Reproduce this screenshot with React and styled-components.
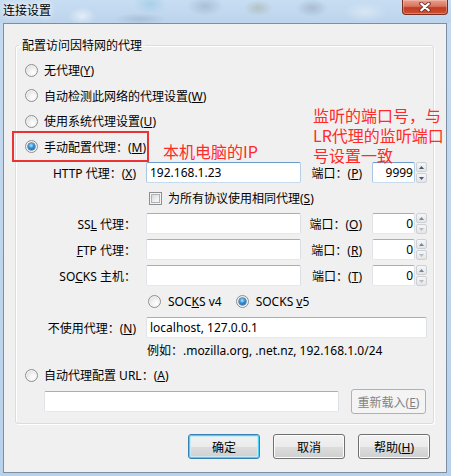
import React from 'react';
import styled, { createGlobalStyle, css } from 'styled-components';

const GlobalStyle = createGlobalStyle`
    * { box-sizing: border-box; }
    html, body { margin: 0; padding: 0; }
    body {
        background: #bfd6ee;
        font-family: "Noto Sans", "Noto Sans CJK SC", sans-serif;
        font-size: 12px;
        color: #000;
    }
    u { text-decoration: underline; text-underline-offset: 1px; }
`;

const CloseIcon = () => (
    <svg width="12" height="10" viewBox="0 0 12 10">
        <path d="M2.2 1.6 L9.8 8.4 M9.8 1.6 L2.2 8.4" stroke="#6b2a1e" strokeWidth="3.8" strokeLinecap="round" />
        <path d="M2.2 1.6 L9.8 8.4 M9.8 1.6 L2.2 8.4" stroke="#fff" strokeWidth="2.1" strokeLinecap="round" />
    </svg>
);

const Arrow = ({ up, color }) => (
    <svg width="5" height="3" viewBox="0 0 5 3">
        <path d={up ? 'M0 3 L2.5 0 L5 3 Z' : 'M0 0 L2.5 3 L5 0 Z'} fill={color} />
    </svg>
);

const Radio = ({ checked, children }) => (
    <RadioLabel>
        <RadioDot $checked={checked} />
        <span>{children}</span>
    </RadioLabel>
);

const SpinBox = ({ value, hot }) => (
    <Spin>
        <SpinField $hot={hot}>{value}</SpinField>
        <SpinButtons>
            <SpinButton><Arrow up color={hot ? '#3c5a84' : '#6f85a3'} /></SpinButton>
            <SpinButton><Arrow color={hot ? '#3c5a84' : '#b4bcc8'} /></SpinButton>
        </SpinButtons>
    </Spin>
);

export default function App() {
    return (
        <>
            <GlobalStyle />
            <Window>
                <TitleBar>
                    <Title>连接设置</Title>
                    <CloseButton><CloseIcon /></CloseButton>
                </TitleBar>
                <Client>
                    <Group>
                        <Legend>配置访问因特网的代理</Legend>
                        <GroupBody>
                            <RadioRow><Radio>无代理(<u>Y</u>)</Radio></RadioRow>
                            <RadioRow><Radio>自动检测此网络的代理设置(<u>W</u>)</Radio></RadioRow>
                            <RadioRow><Radio>使用系统代理设置(<u>U</u>)</Radio></RadioRow>
                            <RadioRow><Radio checked>手动配置代理：(<u>M</u>)</Radio></RadioRow>

                            <ProxyGrid>
                                <FieldLabel>HTTP 代理：(<u>X</u>)</FieldLabel>
                                <TextBox $hot>192.168.1.23</TextBox>
                                <FieldLabel>端口：(<u>P</u>)</FieldLabel>
                                <SpinBox value="9999" hot />

                                <Wide>
                                    <CheckLabel>
                                        <CheckBox />
                                        <span>为所有协议使用相同代理(<u>S</u>)</span>
                                    </CheckLabel>
                                </Wide>

                                <FieldLabel>SS<u>L</u> 代理：</FieldLabel>
                                <TextBox />
                                <FieldLabel>端口：(<u>O</u>)</FieldLabel>
                                <SpinBox value="0" />

                                <FieldLabel><u>F</u>TP 代理：</FieldLabel>
                                <TextBox />
                                <FieldLabel>端口：(<u>R</u>)</FieldLabel>
                                <SpinBox value="0" />

                                <FieldLabel>SO<u>C</u>KS 主机：</FieldLabel>
                                <TextBox />
                                <FieldLabel>端口：(<u>T</u>)</FieldLabel>
                                <SpinBox value="0" />

                                <Wide>
                                    <SocksVersions>
                                        <Radio>SOC<u>K</u>S v4</Radio>
                                        <Radio checked>SOCKS <u>v</u>5</Radio>
                                    </SocksVersions>
                                </Wide>

                                <FieldLabel>不使用代理：(<u>N</u>)</FieldLabel>
                                <Wide><TextBox>localhost, 127.0.0.1</TextBox></Wide>

                                <Wide><Hint>例如：.mozilla.org, .net.nz, 192.168.1.0/24</Hint></Wide>
                            </ProxyGrid>

                            <AutoRow><Radio>自动代理配置 URL：(<u>A</u>)</Radio></AutoRow>
                            <UrlRow>
                                <UrlBox />
                                <Button $disabled $width="75px">重新载入(<u>E</u>)</Button>
                            </UrlRow>
                        </GroupBody>
                    </Group>

                    <ButtonBar>
                        <Button $default>确定</Button>
                        <Button>取消</Button>
                        <Button>帮助(<u>H</u>)</Button>
                    </ButtonBar>
                </Client>

                <MarkBox />
                <Note $left="163px" $top="141px">本机电脑的IP</Note>
                <Note $left="313px" $top="105px">
                    监听的端口号，与<br />LR代理的监听端口<br />号设置一致
                </Note>
            </Window>
        </>
    );
}

const Window = styled.div`
    position: relative;
    width: 451px;
    height: 476px;
    display: flex;
    flex-direction: column;
    overflow: hidden;
    background: linear-gradient(180deg, #c4daf0 0%, #b9d2eb 100%);
`;

const TitleBar = styled.div`
    flex: none;
    height: 23px;
    display: flex;
    align-items: flex-start;
    padding-left: 3px;
    background:
        radial-gradient(ellipse 14px 9px at 82px 16px, rgba(255,255,255,.55), transparent),
        radial-gradient(ellipse 26px 6px at 140px 19px, rgba(110,130,160,.25), transparent),
        radial-gradient(ellipse 16px 10px at 150px 4px, rgba(150,200,230,.6), transparent),
        radial-gradient(ellipse 18px 10px at 205px 6px, rgba(90,110,140,.25), transparent),
        radial-gradient(ellipse 14px 8px at 258px 8px, rgba(150,150,110,.35), transparent),
        radial-gradient(ellipse 16px 9px at 312px 8px, rgba(110,120,140,.3), transparent),
        radial-gradient(ellipse 22px 10px at 365px 12px, rgba(255,255,255,.35), transparent),
        linear-gradient(180deg, #c7ddf2, #bcd4ec);
`;

const Title = styled.span`
    font-family: "Noto Sans CJK SC", sans-serif;
    line-height: 20px;
    text-shadow: 0 0 4px #fff, 0 0 8px #fff;
`;

const CloseButton = styled.div`
    margin-left: auto;
    margin-right: 3px;
    width: 46px;
    height: 15px;
    display: flex;
    align-items: center;
    justify-content: center;
    border: 1px solid #7a2e20;
    border-top: none;
    border-radius: 0 0 4px 4px;
    background: linear-gradient(180deg, #e8a090 0%, #d9745e 45%, #c23b20 55%, #cc5236 100%);
    box-shadow: inset 0 0 0 1px rgba(255, 220, 210, .35);
`;

const Client = styled.div`
    flex: 1;
    margin: 0 4px 3px 3px;
    display: flex;
    flex-direction: column;
    background: #f0f0f0;
    border: 1px solid #7d8ea3;
`;

const Group = styled.fieldset`
    margin: 13px 12px 0 11px;
    padding: 0;
    min-width: 0;
    border: 1px solid #d5dfe5;
    border-radius: 3px;
    box-shadow: inset 1px 1px 0 #fff, 1px 1px 0 #fff;
`;

const Legend = styled.legend`
    margin-left: 3px;
    padding: 0 3px;
    line-height: 16px;
    font-family: "Noto Sans CJK SC", sans-serif;
`;

const GroupBody = styled.div`
    padding: 4.5px 6px 9px 9px;
`;

const RadioRow = styled.div`
    height: 25.5px;
    display: flex;
    align-items: center;
`;

const RadioLabel = styled.label`
    display: flex;
    align-items: center;
    gap: 6px;
    white-space: nowrap;
`;

const RadioDot = styled.span`
    position: relative;
    flex: none;
    width: 13px;
    height: 13px;
    border-radius: 50%;
    border: 1px solid #8e8f8f;
    background: radial-gradient(circle at 65% 70%, #fff 0%, #f3f3f3 35%, #d4d4d4 100%);
    box-shadow: inset 0 0 0 1px #f4f4f4;

    ${props => props.$checked && css`
        &::after {
            content: '';
            position: absolute;
            left: 2px;
            top: 2px;
            width: 7px;
            height: 7px;
            border-radius: 50%;
            background: radial-gradient(circle at 45% 35%, #b4e6ff 0%, #2f8fd8 45%, #0c4a86 100%);
            box-shadow: 0 0 0 .5px #1c4e78;
        }
    `}
`;

const ProxyGrid = styled.div`
    display: grid;
    grid-template-columns: 111px 155px 51px 55px;
    grid-template-rows: 21px 20px 21px 21px 21px 21px 21px 16px;
    column-gap: 10px;
    row-gap: 5px;
    align-items: center;
    margin-top: 2.5px;
`;

const FieldLabel = styled.span`
    justify-self: end;
    white-space: nowrap;
`;

const Wide = styled.div`
    grid-column: 2 / -1;
`;

const TextBox = styled.div`
    height: 21px;
    display: flex;
    align-items: center;
    padding: 0 3px;
    background: #fff;
    border: 1px solid;
    border-color: #abadb3 #dbdfe6 #e3e9ef #e2e3ea;
    border-radius: 2px;
    white-space: nowrap;

    ${props => props.$hot && css`
        border-color: #6a9ccb #b5cfe7 #c5daed #a9c5e0;
    `}
`;

const Spin = styled.div`
    display: flex;
    gap: 1px;
    height: 21px;
`;

const SpinField = styled(TextBox)`
    flex: 1;
    justify-content: flex-end;
    padding: 0 1px;
`;

const SpinButtons = styled.div`
    width: 11px;
    display: flex;
    flex-direction: column;
    gap: 1px;
`;

const SpinButton = styled.div`
    flex: 1;
    display: flex;
    align-items: center;
    justify-content: center;
    background: linear-gradient(180deg, #f6f6f6, #e4e4e4);
    border: 1px solid #cdd1d6;
    border-radius: 2px;
`;

const CheckLabel = styled.label`
    display: flex;
    align-items: center;
    gap: 6px;
    margin-left: 3px;
`;

const CheckBox = styled.span`
    flex: none;
    width: 13px;
    height: 13px;
    border: 1px solid #8e8f8f;
    background: #f4f4f4;
    box-shadow: inset 0 0 0 1px #f4f4f4, inset 0 0 0 2px #aeb3b9;
    background-image: linear-gradient(135deg, #cfcfcf 0%, #f0f0f0 60%, #fcfcfc 100%);
`;

const SocksVersions = styled.div`
    display: flex;
    align-items: center;
    gap: 14px;
    margin-left: 2px;

    & > label { gap: 7px; }
`;

const Hint = styled.span`
    display: block;
    padding-left: 1px;
    line-height: 16px;
    white-space: nowrap;
`;

const AutoRow = styled.div`
    height: 16px;
    margin-top: 8px;
    display: flex;
    align-items: center;
`;

const UrlRow = styled.div`
    display: flex;
    align-items: center;
    gap: 12px;
    margin-top: 6px;
    padding-left: 19px;
`;

const UrlBox = styled(TextBox)`
    width: 295px;
`;

const Button = styled.button`
    width: ${props => props.$width || '72px'};
    height: 25px;
    padding: 0;
    font: inherit;
    color: #000;
    border: 1px solid #707070;
    border-radius: 3px;
    background: linear-gradient(180deg, #f2f2f2 0%, #ebebeb 50%, #dddddd 51%, #cfcfcf 100%);
    box-shadow: inset 0 0 0 1px #fcfcfc;
    white-space: nowrap;

    ${props => props.$default && css`
        border-color: #3c7fb1;
        box-shadow: inset 0 0 0 1px #48d0f8, inset 0 0 0 2px #c4ecfb;
    `}

    ${props => props.$disabled && css`
        color: #838383;
        border-color: #adb2b5;
        background: #f4f4f4;
        box-shadow: none;
    `}
`;

const ButtonBar = styled.div`
    display: flex;
    justify-content: flex-end;
    gap: 13px;
    margin-top: 10px;
    padding-right: 16px;
`;

const MarkBox = styled.div`
    position: absolute;
    left: 12px;
    top: 131px;
    width: 137px;
    height: 31px;
    border: 2px solid #ea3434;
`;

const Note = styled.div`
    position: absolute;
    left: ${props => props.$left};
    top: ${props => props.$top};
    font-family: "Noto Sans CJK SC", sans-serif;
    font-size: 16px;
    line-height: 20px;
    color: #ff2a2a;
    white-space: nowrap;
`;
